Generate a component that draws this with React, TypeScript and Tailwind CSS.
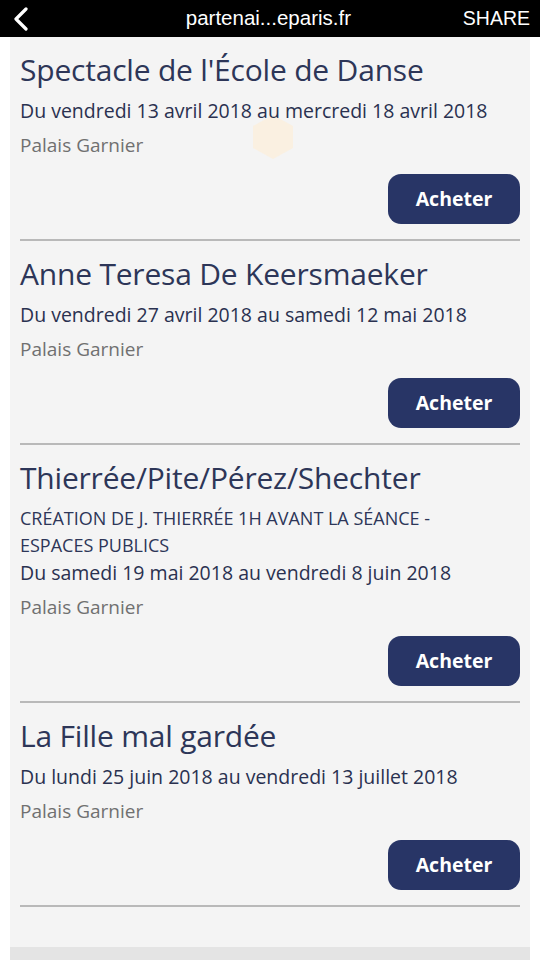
import React from 'react';

const events = [
  {
    title: "Spectacle de l'École de Danse",
    dates: "Du vendredi 13 avril 2018 au mercredi 18 avril 2018",
  },
  {
    title: "Anne Teresa De Keersmaeker",
    dates: "Du vendredi 27 avril 2018 au samedi 12 mai 2018",
  },
  {
    title: "Thierrée/Pite/Pérez/Shechter",
    note: "CRÉATION DE J. THIERRÉE 1H AVANT LA SÉANCE - ESPACES PUBLICS",
    dates: "Du samedi 19 mai 2018 au vendredi 8 juin 2018",
  },
  {
    title: "La Fille mal gardée",
    dates: "Du lundi 25 juin 2018 au vendredi 13 juillet 2018",
  },
];

const App = () => {
  return (
    <div className="h-[960px] overflow-hidden bg-white flex flex-col" style={{ fontFamily: '"Open Sans", sans-serif' }}>
      {/* Browser bar */}
      <div className="h-[37px] bg-black flex items-center pl-[12px] pr-[10px] shrink-0" style={{ fontFamily: '"Liberation Sans", Arial, sans-serif' }}>
        <svg width="18" height="24" viewBox="0 0 18 24" className="shrink-0">
          <path d="M14 2 L4 12 L14 22" fill="none" stroke="white" strokeWidth="3.2" strokeLinecap="round" strokeLinejoin="round" />
        </svg>
        <div className="flex-1 text-center text-white text-[20.5px] pl-[44px]">partenai...eparis.fr</div>
        <div className="text-white text-[19.5px]">SHARE</div>
      </div>

      {/* Card */}
      <div className="relative flex-1 mx-[10px] bg-[#f4f4f4] flex flex-col">
        <svg className="absolute left-[238px] top-[75px]" width="50" height="50" viewBox="0 0 50 50">
          <polygon points="25,3 45,14 45,36 25,47 5,36 5,14" fill="#fbefdc" opacity="0.8" />
        </svg>
        <div className="relative px-[10px] flex-1">
          {events.map((ev) => (
            <div key={ev.title} className="pt-[14px] pb-[15px] border-b-2 border-[#b9b9b9]">
              <h2 className="text-[30px] leading-[38px] text-[#2d3658] tracking-[-0.2px]">{ev.title}</h2>
              {ev.note && (
                <p className="mt-[8px] text-[18px] leading-[27px] text-[#2d3658] pr-[40px]">{ev.note}</p>
              )}
              <p className={`${ev.note ? 'mt-0' : 'mt-[8px]'} text-[19.5px] leading-[28px] text-[#2a3150]`}>{ev.dates}</p>
              <p className="mt-[6px] text-[19px] leading-[28px] text-[#707070]">Palais Garnier</p>
              <div className="mt-[15px] flex justify-end">
                <button className="w-[132px] h-[50px] rounded-[13px] bg-[#283566] text-white text-[19.5px] font-bold">
                  Acheter
                </button>
              </div>
            </div>
          ))}
        </div>
        <div className="h-[13px] bg-[#e4e4e4] shrink-0" />
      </div>
    </div>
  );
};

export default App;
